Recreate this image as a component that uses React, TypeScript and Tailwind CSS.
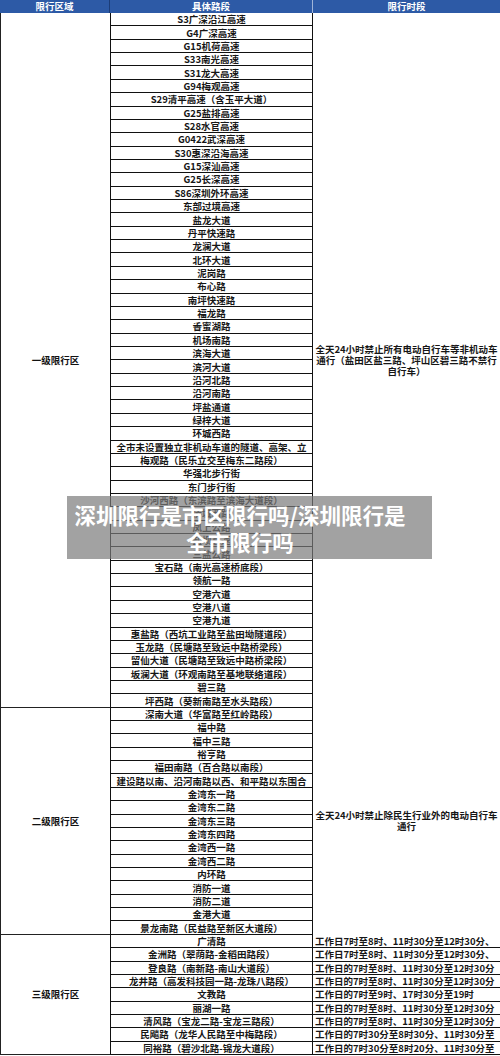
const font = "font-['Noto_Sans_CJK_SC','Noto_Sans',sans-serif]";

type Section = {
  label: string;
  roads: string[];
  note?: string[];
  times?: string[];
};

const sections: Section[] = [
  {
    label: "一级限行区",
    roads: [
      "S3广深沿江高速",
      "G4广深高速",
      "G15机荷高速",
      "S33南光高速",
      "S31龙大高速",
      "G94梅观高速",
      "S29清平高速（含玉平大道）",
      "G25盐排高速",
      "S28水官高速",
      "G0422武深高速",
      "S30惠深沿海高速",
      "G15深汕高速",
      "G25长深高速",
      "S86深圳外环高速",
      "东部过境高速",
      "盐龙大道",
      "丹平快速路",
      "龙澜大道",
      "北环大道",
      "泥岗路",
      "布心路",
      "南坪快速路",
      "福龙路",
      "香蜜湖路",
      "机场南路",
      "滨海大道",
      "滨河大道",
      "沿河北路",
      "沿河南路",
      "坪盐通道",
      "绿梓大道",
      "环城西路",
      "全市未设置独立非机动车道的隧道、高架、立",
      "梅观路（民乐立交至梅东二路段）",
      "华强北步行街",
      "东门步行街",
      "沙河西路（东滨路至滨海大道段）",
      "侨城西路",
      "凤上公路",
      "盐坝高速",
      "三盐公路",
      "宝石路（南光高速桥底段）",
      "领航一路",
      "空港六道",
      "空港八道",
      "空港九道",
      "惠盐路（西坑工业路至盐田坳隧道段）",
      "玉龙路（民塘路至致远中路桥梁段）",
      "留仙大道（民塘路至致远中路桥梁段）",
      "坂澜大道（环观南路至基地联络道段）",
      "碧三路",
      "坪西路（葵新南路至水头路段）",
    ],
    note: [
      "全天24小时禁止所有电动自行车等非机动车",
      "通行（盐田区盐三路、坪山区碧三路不禁行",
      "自行车）",
    ],
  },
  {
    label: "二级限行区",
    roads: [
      "深南大道（华富路至红岭路段）",
      "福中路",
      "福中三路",
      "裕亨路",
      "福田南路（百合路以南段）",
      "建设路以南、沿河南路以西、和平路以东围合",
      "金湾东一路",
      "金湾东二路",
      "金湾东三路",
      "金湾东四路",
      "金湾西一路",
      "金湾西二路",
      "内环路",
      "消防一道",
      "消防二道",
      "金港大道",
      "景龙南路（民益路至新区大道段）",
    ],
    note: ["全天24小时禁止除民生行业外的电动自行车", "通行"],
  },
  {
    label: "三级限行区",
    roads: [
      "广清路",
      "金洲路（翠荫路-金稻田路段）",
      "登良路（南新路-南山大道段）",
      "龙井路（高发科技园一路-龙珠八路段）",
      "文教路",
      "丽湖一路",
      "清风路（宝龙二路-宝龙三路段）",
      "民飚路（龙华人民路至中梅路段）",
      "同裕路（碧沙北路-锦龙大道段）",
    ],
    times: [
      "工作日7时至8时、11时30分至12时30分、",
      "工作日7时至8时、11时30分至12时30分、",
      "工作日的7时至8时、11时30分至12时30分",
      "工作日的7时至8时、11时30分至12时30分",
      "工作日的7时至9时、17时30分至19时",
      "工作日的7时至8时、11时30分至12时30分",
      "工作日的7时至8时、11时30分至12时30分",
      "工作日的7时30分至8时30分、11时30分至",
      "工作日的7时30分至8时20分、11时30分至",
    ],
  },
];

const ZoneBlock = ({ section }: { section: Section }) => (
  <div className="flex">
    <div className="flex w-[110px] shrink-0 items-center justify-center border-b border-l border-[#222]">
      <span className="text-[9.5px] font-bold text-[#111]">{section.label}</span>
    </div>

    <div className="flex w-[203px] shrink-0 flex-col border-x border-[#111]">
      {section.roads.map((road, i) => (
        <div
          key={i}
          className="flex h-[13.37px] items-center justify-center whitespace-nowrap border-b border-[#111] text-[9.5px] leading-[12px] font-bold text-[#161616]"
        >
          {road}
        </div>
      ))}
    </div>

    {section.times ? (
      <div className="flex min-w-0 flex-1 flex-col">
        {section.times.map((t, i) => (
          <div
            key={i}
            className="flex h-[13.37px] items-center whitespace-nowrap border-b border-[#111] pl-[2px] text-[9.5px] leading-[12px] font-bold text-[#161616]"
          >
            <span className="truncate">{t}</span>
          </div>
        ))}
      </div>
    ) : (
      <div className="flex min-w-0 flex-1 flex-col items-center justify-center text-center text-[9.5px] leading-[11px] font-bold text-[#161616]">
        {section.note?.map((line, i) => (
          <span key={i} className="whitespace-nowrap">
            {line}
          </span>
        ))}
      </div>
    )}
  </div>
);

export default function App() {
  return (
    <div className={`relative h-[1056px] w-[500px] overflow-hidden bg-white ${font}`}>
      {/* header */}
      <div className="flex h-[13px] bg-[#2d5aa6] text-[9.5px] font-bold text-white">
        <div className="flex w-[110px] items-center justify-center border-r border-[#1c3d78]">
          限行区域
        </div>
        <div className="flex w-[203px] items-center justify-center border-r border-[#9fb4d8]">
          具体路段
        </div>
        <div className="flex flex-1 items-center justify-center">限行时段</div>
      </div>

      {sections.map((s) => (
        <ZoneBlock key={s.label} section={s} />
      ))}

      {/* title overlay */}
      <div className="absolute left-[67px] top-[496px] flex h-[63px] w-[365px] items-center bg-[#7b7b7b]/70 pl-[10px]">
        <div className="flex w-[326px] flex-col items-center text-[21.5px] leading-[27px] font-bold text-white">
          <span className="whitespace-nowrap">深圳限行是市区限行吗/深圳限行是</span>
          <span className="whitespace-nowrap">全市限行吗</span>
        </div>
      </div>
    </div>
  );
}
